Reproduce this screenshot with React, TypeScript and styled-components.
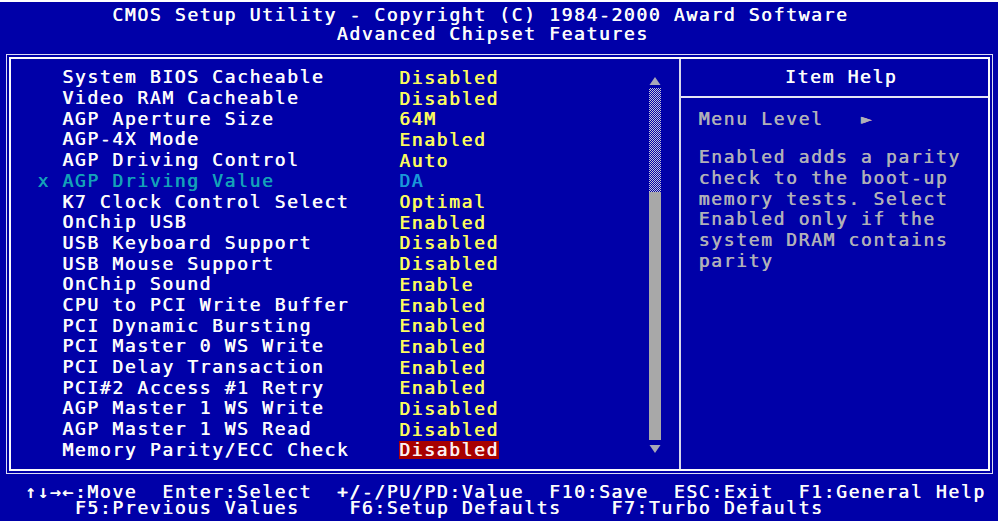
import styled, { createGlobalStyle } from 'styled-components';

// text-mode cell size, the screen is an 80 column grid
const COL = 12.475;
const ROW = 20.7;

type Item = { label: string; value: string; locked?: boolean; selected?: boolean };

const items: Item[] = [
  { label: 'System BIOS Cacheable', value: 'Disabled' },
  { label: 'Video RAM Cacheable', value: 'Disabled' },
  { label: 'AGP Aperture Size', value: '64M' },
  { label: 'AGP-4X Mode', value: 'Enabled' },
  { label: 'AGP Driving Control', value: 'Auto' },
  { label: 'AGP Driving Value', value: 'DA', locked: true },
  { label: 'K7 Clock Control Select', value: 'Optimal' },
  { label: 'OnChip USB', value: 'Enabled' },
  { label: 'USB Keyboard Support', value: 'Disabled' },
  { label: 'USB Mouse Support', value: 'Disabled' },
  { label: 'OnChip Sound', value: 'Enable' },
  { label: 'CPU to PCI Write Buffer', value: 'Enabled' },
  { label: 'PCI Dynamic Bursting', value: 'Enabled' },
  { label: 'PCI Master 0 WS Write', value: 'Enabled' },
  { label: 'PCI Delay Transaction', value: 'Enabled' },
  { label: 'PCI#2 Access #1 Retry', value: 'Enabled' },
  { label: 'AGP Master 1 WS Write', value: 'Disabled' },
  { label: 'AGP Master 1 WS Read', value: 'Disabled' },
  { label: 'Memory Parity/ECC Check', value: 'Disabled', selected: true },
];

const GlobalStyle = createGlobalStyle`
  html, body {
    margin: 0;
    padding: 0;
    background: #ffffff;
  }
  body {
    width: 998px;
    height: 525px;
    overflow: hidden;
  }
`;

const Screen = styled.main`
  margin-top: 2px;
  width: 998px;
  height: 519px;
  box-sizing: border-box;
  padding-top: 3px;
  background: #0000a8;
  color: #fcfcfc;
  font-family: "DejaVu Sans Mono", "Liberation Mono", monospace;
  font-size: 18px;
  letter-spacing: 1.64px;
  text-shadow: 0.55px 0 currentColor;
  white-space: pre;
  overflow: hidden;
  display: flex;
  flex-direction: column;
`;

const TextLine = styled.div<{ $indent: number; $height: number }>`
  height: ${p => p.$height}px;
  line-height: ${p => p.$height}px;
  padding-left: ${p => p.$indent * COL}px;
`;

const Frame = styled.section`
  margin: 11px 0 0 6px;
  width: 987px;
  box-sizing: border-box;
  border: 1px solid #dcdcf4;
  padding: 2px;
`;

const FrameInner = styled.div`
  display: flex;
  height: 410px;
  border: 2px solid #fcfcfc;
`;

const MenuPane = styled.div`
  width: 668px;
  box-sizing: border-box;
  padding: 8.4px 0 0 26.4px;
  display: flex;
`;

const ItemList = styled.div`
  width: ${49 * COL}px;
  display: flex;
  flex-direction: column;
`;

const ItemRow = styled.div`
  display: grid;
  grid-template-columns: ${2 * COL}px ${27 * COL}px 1fr;
  height: ${ROW}px;
  line-height: ${ROW}px;
`;

const Mark = styled.span`
  color: #14a2b8;
`;

const Label = styled.span<{ $locked?: boolean }>`
  color: ${p => (p.$locked ? '#14a2b8' : '#fcfcfc')};
`;

const Value = styled.span<{ $locked?: boolean; $selected?: boolean }>`
  justify-self: start;
  align-self: start;
  margin-top: 1.6px;
  height: 17.6px;
  line-height: 17.6px;
  color: ${p => (p.$selected ? '#fcf0f0' : p.$locked ? '#1a98d8' : '#fcfc5c')};
  background: ${p => (p.$selected ? '#a80000' : 'transparent')};
`;

const ScrollBar = styled.div`
  width: ${COL}px;
  display: flex;
  flex-direction: column;
`;

const ArrowCell = styled.div<{ $top: number }>`
  height: ${ROW}px;
  box-sizing: border-box;
  padding-top: ${p => p.$top}px;
  display: flex;
  justify-content: center;
  align-items: flex-start;
`;

const Track = styled.div`
  height: ${5 * ROW}px;
  background: repeating-conic-gradient(#c4c4d8 0 25%, transparent 0 50%) 0 0 / 2px 2px;
`;

const Thumb = styled.div`
  height: ${12 * ROW}px;
  background: #a8a8a8;
`;

const HelpPane = styled.aside`
  flex: 1;
  border-left: 2px solid #d8d8ec;
  display: flex;
  flex-direction: column;
`;

const HelpTitle = styled.div`
  margin-top: 8.4px;
  height: ${ROW}px;
  line-height: ${ROW}px;
  padding-left: 104px;
`;

const HelpRule = styled.div`
  margin: 8px 0 10.8px;
  height: 2px;
  background: #e4e4f4;
`;

const HelpBody = styled.div`
  padding-left: 17.6px;
  width: ${23 * COL}px;
  color: #b0b0b8;
  line-height: ${ROW}px;
`;

const MenuLevel = styled.div`
  height: ${ROW}px;
  margin-bottom: ${ROW * 0.85}px;
`;

const HelpText = styled.p`
  margin: 0;
  white-space: normal;
`;

const Footer = styled.footer`
  margin-top: 10.1px;
  display: flex;
  flex-direction: column;
`;

const Triangle = ({ down }: { down?: boolean }) => (
  <svg width="12" height="8" viewBox="0 0 12 8">
    <path d={down ? 'M0.5 0 L11.5 0 L6 8 Z' : 'M6 0 L11.5 8 L0.5 8 Z'} fill="#a8a8b8" />
  </svg>
);

export default function App() {
  return (
    <>
      <GlobalStyle />
      <Screen>
        <TextLine $indent={9} $height={19}>CMOS Setup Utility - Copyright (C) 1984-2000 Award Software</TextLine>
        <TextLine $indent={27} $height={19}>Advanced Chipset Features</TextLine>

        <Frame>
          <FrameInner>
            <MenuPane>
              <ItemList>
                {items.map(it => (
                  <ItemRow key={it.label}>
                    <Mark>{it.locked ? 'x' : ''}</Mark>
                    <Label $locked={it.locked}>{it.label}</Label>
                    <Value $locked={it.locked} $selected={it.selected}>{it.value}</Value>
                  </ItemRow>
                ))}
              </ItemList>
              <ScrollBar>
                <ArrowCell $top={10}><Triangle /></ArrowCell>
                <Track />
                <Thumb />
                <ArrowCell $top={5}><Triangle down /></ArrowCell>
              </ScrollBar>
            </MenuPane>

            <HelpPane>
              <HelpTitle>Item Help</HelpTitle>
              <HelpRule />
              <HelpBody>
                <MenuLevel>Menu Level   ►</MenuLevel>
                <HelpText>Enabled adds a parity check to the boot-up memory tests. Select Enabled only if the system DRAM contains parity</HelpText>
              </HelpBody>
            </HelpPane>
          </FrameInner>
        </Frame>

        <Footer>
          <TextLine $indent={2} $height={16}>↑↓→←:Move  Enter:Select  +/-/PU/PD:Value  F10:Save  ESC:Exit  F1:General Help</TextLine>
          <TextLine $indent={6} $height={16}>F5:Previous Values    F6:Setup Defaults    F7:Turbo Defaults</TextLine>
        </Footer>
      </Screen>
    </>
  );
}
